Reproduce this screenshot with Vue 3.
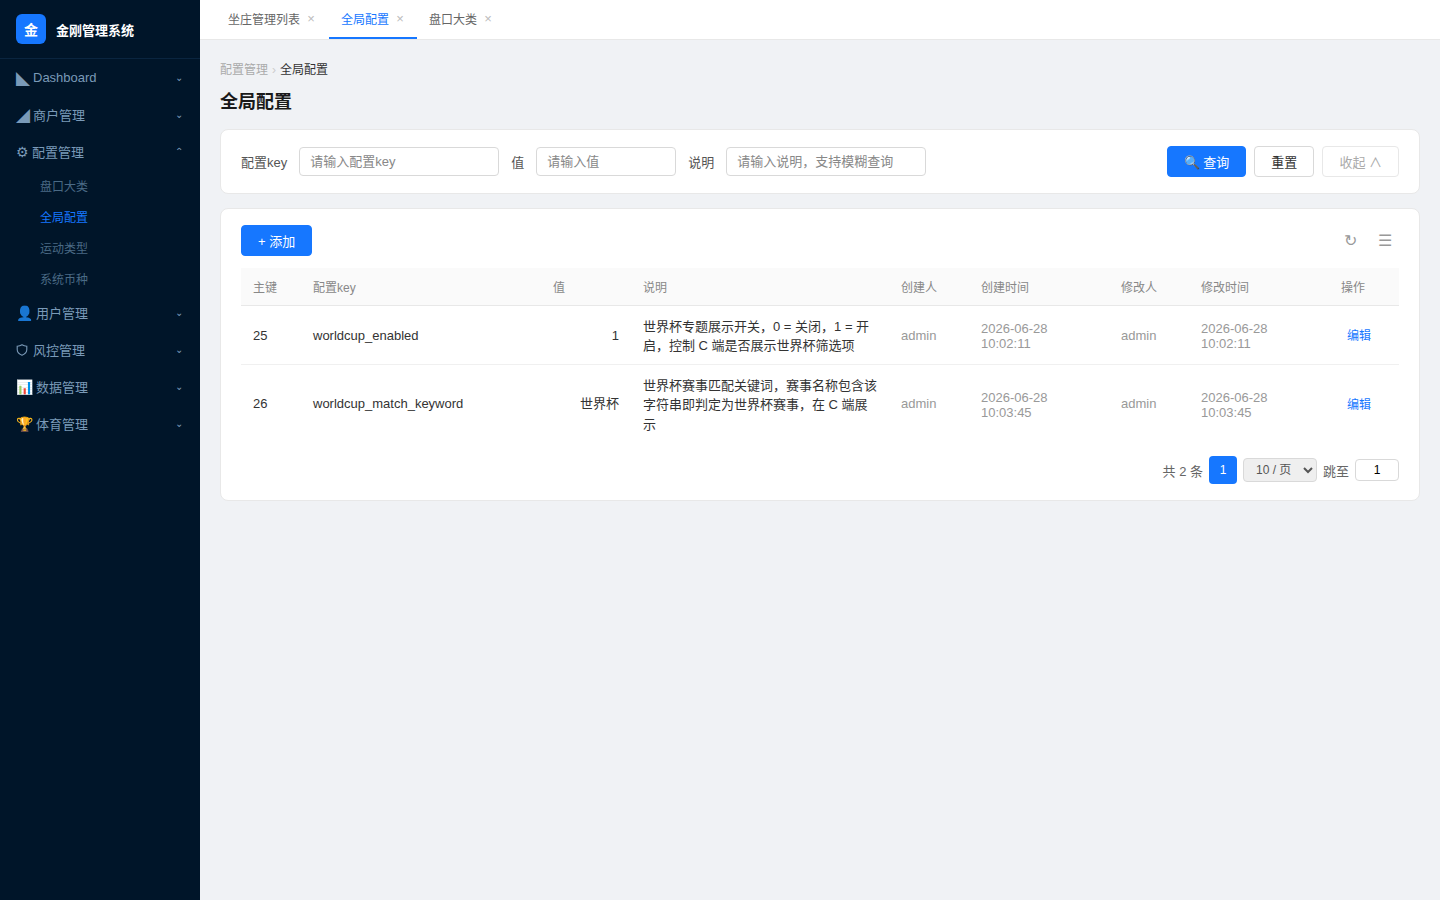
<template>
  <div class="layout">
    <aside class="sider">
      <div class="logo">
        <div class="logo-mark">金</div>
        <span class="logo-name">金刚管理系统</span>
      </div>
      <nav class="menu">
        <template v-for="group in menus" :key="group.label">
          <div class="menu-item">
            <!-- le bouclier est dessiné : le glyphe sort en couleur avec la police emoji -->
            <svg v-if="group.label === '风控管理'" class="menu-svg" viewBox="0 0 14 14" width="14" height="14">
              <path d="M6 1.8c1.5 1 3 1.400 4.800 1.400v3.400c0 2.700-2 4.600-4.800 5.600-2.800-1-4.800-2.900-4.800-5.600V3.200C3 3.200 4.500 2.800 6 1.800z" fill="none" stroke="currentColor" stroke-width="1.1" />
            </svg>
            <span v-else class="menu-icon">{{ group.icon }}</span>
            <span class="menu-label">{{ group.label }}</span>
            <span class="menu-arrow">{{ group.children ? '⌃' : '⌄' }}</span>
          </div>
          <div v-if="group.children" class="sub-list">
            <div
              v-for="child in group.children"
              :key="child"
              class="sub-item"
              :class="{ active: child === '全局配置' }"
            >{{ child }}</div>
          </div>
        </template>
      </nav>
    </aside>

    <div class="main">
      <div class="tabs">
        <div
          v-for="tab in tabs"
          :key="tab"
          class="tab"
          :class="{ active: tab === '全局配置' }"
        >
          <span>{{ tab }}</span>
          <span class="tab-close">×</span>
        </div>
      </div>

      <div class="content">
        <div class="breadcrumb">
          <span class="crumb-parent">配置管理</span>
          <span class="crumb-sep">›</span>
          <span>全局配置</span>
        </div>
        <h1 class="page-title">全局配置</h1>

        <div class="card search-card">
          <label class="field-label">配置key</label>
          <input class="field-input w200" placeholder="请输入配置key" />
          <label class="field-label">值</label>
          <input class="field-input w140" placeholder="请输入值" />
          <label class="field-label">说明</label>
          <input class="field-input w200" placeholder="请输入说明，支持模糊查询" />
          <div class="search-actions">
            <button class="btn primary">🔍 查询</button>
            <button class="btn">重置</button>
            <button class="btn disabled">收起 ∧</button>
          </div>
        </div>

        <div class="card table-card">
          <div class="toolbar">
            <button class="btn primary add-btn">+ 添加</button>
            <div class="tools">
              <span class="tool">↻</span>
              <span class="tool">☰</span>
            </div>
          </div>

          <table class="data-table">
            <colgroup>
              <col v-for="w in colWidths" :key="w.key" :style="{ width: w.width + 'px' }" />
            </colgroup>
            <thead>
              <tr>
                <th v-for="h in headers" :key="h">{{ h }}</th>
              </tr>
            </thead>
            <tbody>
              <tr v-for="row in rows" :key="row.id">
                <td>{{ row.id }}</td>
                <td>{{ row.key }}</td>
                <td class="right">{{ row.value }}</td>
                <td class="desc">{{ row.desc }}</td>
                <td class="muted">{{ row.creator }}</td>
                <td class="muted time">{{ row.created }}</td>
                <td class="muted">{{ row.editor }}</td>
                <td class="muted time">{{ row.edited }}</td>
                <td class="action"><a class="link">编辑</a></td>
              </tr>
            </tbody>
          </table>

          <div class="pager">
            <span class="pager-text">共 2 条</span>
            <span class="page-num">1</span>
            <select class="page-size">
              <option>10 / 页</option>
            </select>
            <span class="pager-text">跳至</span>
            <input class="page-jump" value="1" />
          </div>
        </div>
      </div>
    </div>
  </div>
</template>

<script setup>
const menus = [
  { icon: '◣', label: 'Dashboard' },
  { icon: '◢', label: '商户管理' },
  { icon: '⚙', label: '配置管理', children: ['盘口大类', '全局配置', '运动类型', '系统币种'] },
  { icon: '👤', label: '用户管理' },
  { icon: '🛡', label: '风控管理' },
  { icon: '📊', label: '数据管理' },
  { icon: '🏆', label: '体育管理' },
]

const tabs = ['坐庄管理列表', '全局配置', '盘口大类']

const headers = ['主键', '配置key', '值', '说明', '创建人', '创建时间', '修改人', '修改时间', '操作']
const colWidths = [60, 240, 90, 258, 80, 140, 80, 140, 70].map((width, key) => ({ width, key }))

const rows = [
  {
    id: 25,
    key: 'worldcup_enabled',
    value: '1',
    desc: '世界杯专题展示开关，0 = 关闭，1 = 开启，控制 C 端是否展示世界杯筛选项',
    creator: 'admin',
    created: '2026-06-28 10:02:11',
    editor: 'admin',
    edited: '2026-06-28 10:02:11',
  },
  {
    id: 26,
    key: 'worldcup_match_keyword',
    value: '世界杯',
    desc: '世界杯赛事匹配关键词，赛事名称包含该字符串即判定为世界杯赛事，在 C 端展示',
    creator: 'admin',
    created: '2026-06-28 10:03:45',
    editor: 'admin',
    edited: '2026-06-28 10:03:45',
  },
]
</script>

<style>
html, body { margin: 0; background: #f0f2f5; }
</style>

<style scoped>
.layout {
  display: flex;
  min-height: 900px;
  font-family: "Liberation Sans", "Noto Sans CJK SC", sans-serif;
  font-size: 13px;
  color: #333;
}

.sider { width: 200px; flex-shrink: 0; background: #001529; }
.logo {
  height: 58px;
  display: flex;
  align-items: center;
  gap: 10px;
  padding: 0 16px;
  border-bottom: 1px solid #0a2540;
}
.logo-mark {
  width: 30px; height: 30px;
  border-radius: 6px;
  background: #1677ff;
  color: #fff;
  font-size: 14px;
  font-weight: 700;
  display: flex;
  align-items: center;
  justify-content: center;
}
.logo-name { color: #fff; font-size: 13px; font-weight: 700; }

.menu-item {
  height: 37px;
  display: flex;
  align-items: center;
  gap: 3px;
  padding: 0 17px 0 16px;
  box-sizing: border-box;
  color: #7a9ab8;
}
.menu-icon { font-size: 14px; }
.menu-svg { flex-shrink: 0; }
.menu-label { flex: 1; }
.menu-arrow { font-size: 10px; }
.sub-list { margin: 2px 0 -2px; }
.sub-item {
  height: 31px;
  line-height: 31px;
  padding-left: 40px;
  font-size: 12px;
  color: #4a6a85;
}
.sub-item.active { color: #1677ff; }

.main { flex: 1; min-width: 0; }
.tabs {
  height: 39px;
  display: flex;
  padding-left: 16px;
  background: #fff;
  border-bottom: 1px solid #e8e8e8;
}
.tab {
  display: flex;
  align-items: center;
  gap: 6px;
  padding: 0 12px;
  font-size: 12px;
  color: #666;
  border-bottom: 2px solid transparent;
}
.tab:nth-child(2) { margin-left: 1px; }
.tab.active { color: #1677ff; border-bottom-color: #1677ff; }
.tab-close { width: 10px; color: #bbb; font-size: 13px; line-height: 12px; text-align: center; }

.content { padding: 20px; }
.breadcrumb { font-size: 12px; line-height: 20px; color: #333; display: flex; gap: 4px; }
.crumb-parent { color: #aaa; }
.crumb-sep { color: #ccc; }
.page-title { margin: 10px 0 15px; font-size: 18px; line-height: 24px; font-weight: 700; color: #1a1a1a; }

.card {
  background: #fff;
  border: 1px solid #e8e8e8;
  border-radius: 8px;
}
.search-card {
  height: 65px;
  box-sizing: border-box;
  display: flex;
  align-items: center;
  gap: 12px;
  padding: 0 20px 1px;
  margin-bottom: 14px;
}
.field-label { font-size: 13px; color: #555; margin-top: 1px; }
.field-input {
  height: 29px;
  box-sizing: border-box;
  padding: 0 10px;
  border: 1px solid #d9d9d9;
  border-radius: 4px;
  font: inherit;
  outline: none;
}
.field-input::placeholder { color: #888; }
.w200 { width: 200px; }
.w140 { width: 140px; }
.search-actions { margin-left: auto; display: flex; gap: 8px; }

.btn {
  height: 31px;
  padding: 0 16px;
  border: 1px solid #d9d9d9;
  border-radius: 4px;
  background: #fff;
  color: #333;
  font: inherit;
}
.btn.primary { background: #1677ff; border-color: #1677ff; color: #fff; }
.btn.disabled { border-color: #e8e8e8; color: #aaa; }

.table-card { padding: 16px 20px; }
.toolbar { display: flex; align-items: center; justify-content: space-between; margin-bottom: 12px; }
.tools { display: flex; gap: 21px; padding-right: 7px; color: #999; font-size: 16px; }

.data-table { width: 100%; table-layout: fixed; border-collapse: collapse; }
.data-table th {
  height: 37px;
  padding: 0 12px;
  text-align: left;
  font-size: 12px;
  font-weight: 400;
  color: #888;
  background: #fafafa;
  border-bottom: 1px solid #e8e8e8;
}
.data-table td {
  padding: 10px 12px 9.5px;
  line-height: 19.5px;
  color: #333;
  border-bottom: 1px solid #f0f0f0;
}
.data-table tr:last-child td { border-bottom: 0; }
.data-table td.right { text-align: right; }
.data-table td.desc { padding-top: 10.5px; padding-bottom: 8.5px; }
.data-table td.muted { color: #999; }
.data-table td.time { line-height: 15px; padding-top: 11px; }
.data-table td.action { padding-top: 12px; }
.link { color: #1677ff; padding-left: 6px; font-size: 12px; }

.pager {
  display: flex;
  align-items: center;
  justify-content: flex-end;
  gap: 6px;
  margin-top: 13px;
  color: #666;
}
.pager-text { padding-top: 2px; }
.page-num {
  width: 28px; height: 28px;
  border-radius: 4px;
  background: #1677ff;
  color: #fff;
  font-size: 12px;
  display: flex;
  align-items: center;
  justify-content: center;
}
.page-size {
  width: 74px; height: 24px;
  border: 1px solid #d9d9d9;
  border-radius: 4px;
  padding-left: 8px;
  font: inherit;
  font-size: 12px;
  color: #555;
}
.page-jump {
  width: 44px; height: 22px;
  box-sizing: border-box;
  border: 1px solid #d9d9d9;
  border-radius: 4px;
  text-align: center;
  font: inherit;
  font-size: 12px;
  outline: none;
}
</style>
